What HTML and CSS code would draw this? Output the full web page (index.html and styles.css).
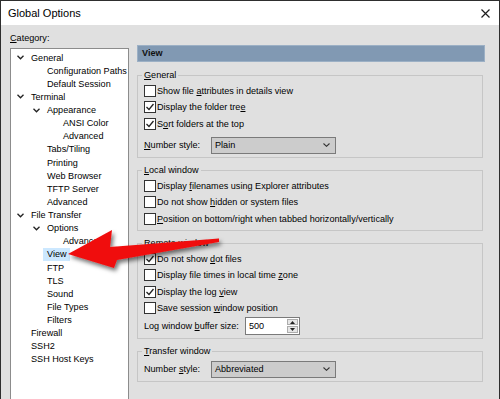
FILE: index.html
```html
<!DOCTYPE html>
<html lang="en">
<head>
    <meta charset="UTF-8">
    <title>Global Options</title>
    <link rel="stylesheet" href="styles.css">
</head>
<body>
<div class="window">
    <div class="titlebar">
        <span class="title">Global Options</span>
        <svg class="close" width="9" height="9" viewBox="0 0 9 9"><path d="M0.5 0.5 L8.5 8.5 M8.5 0.5 L0.5 8.5" stroke="#1e1e1e" stroke-width="1.2" fill="none"/></svg>
    </div>
    <div class="content">
        <div class="sidebar">
            <div class="cat-label"><u>C</u>ategory:</div>
            <div class="tree">
                <div class="node lv0"><span class="twist"><svg width="7" height="5" viewBox="0 0 7 5"><path d="M0.5 0.8 L3.5 3.8 L6.5 0.8" stroke="#222" stroke-width="1.3" fill="none"/></svg></span>General</div>
                <div class="node lv1"><span class="twist"></span>Configuration Paths</div>
                <div class="node lv1"><span class="twist"></span>Default Session</div>
                <div class="node lv0"><span class="twist"><svg width="7" height="5" viewBox="0 0 7 5"><path d="M0.5 0.8 L3.5 3.8 L6.5 0.8" stroke="#222" stroke-width="1.3" fill="none"/></svg></span>Terminal</div>
                <div class="node lv1"><span class="twist"><svg width="7" height="5" viewBox="0 0 7 5"><path d="M0.5 0.8 L3.5 3.8 L6.5 0.8" stroke="#222" stroke-width="1.3" fill="none"/></svg></span>Appearance</div>
                <div class="node lv2"><span class="twist"></span>ANSI Color</div>
                <div class="node lv2"><span class="twist"></span>Advanced</div>
                <div class="node lv1"><span class="twist"></span>Tabs/Tiling</div>
                <div class="node lv1"><span class="twist"></span>Printing</div>
                <div class="node lv1"><span class="twist"></span>Web Browser</div>
                <div class="node lv1"><span class="twist"></span>TFTP Server</div>
                <div class="node lv1"><span class="twist"></span>Advanced</div>
                <div class="node lv0"><span class="twist"><svg width="7" height="5" viewBox="0 0 7 5"><path d="M0.5 0.8 L3.5 3.8 L6.5 0.8" stroke="#222" stroke-width="1.3" fill="none"/></svg></span>File Transfer</div>
                <div class="node lv1"><span class="twist"><svg width="7" height="5" viewBox="0 0 7 5"><path d="M0.5 0.8 L3.5 3.8 L6.5 0.8" stroke="#222" stroke-width="1.3" fill="none"/></svg></span>Options</div>
                <div class="node lv2"><span class="twist"></span>Advanced</div>
                <div class="node lv1"><span class="twist"></span><span class="sel">View</span></div>
                <div class="node lv1"><span class="twist"></span>FTP</div>
                <div class="node lv1"><span class="twist"></span>TLS</div>
                <div class="node lv1"><span class="twist"></span>Sound</div>
                <div class="node lv1"><span class="twist"></span>File Types</div>
                <div class="node lv1"><span class="twist"></span>Filters</div>
                <div class="node lv0"><span class="twist"></span>Firewall</div>
                <div class="node lv0"><span class="twist"></span>SSH2</div>
                <div class="node lv0"><span class="twist"></span>SSH Host Keys</div>
            </div>
        </div>
        <div class="pane">
            <div class="pane-head">View</div>

            <fieldset class="group">
                <legend><u>G</u>eneral</legend>
                <div class="check"><span class="box"></span><span>Show file <u>a</u>ttributes in details view</span></div>
                <div class="check"><span class="box"><svg width="10" height="10" viewBox="0 0 10 10"><path d="M1.5 5 L4 7.5 L8.5 2" stroke="#222" stroke-width="1.3" fill="none"/></svg></span><span>Display the folder tre<u>e</u></span></div>
                <div class="check"><span class="box"><svg width="10" height="10" viewBox="0 0 10 10"><path d="M1.5 5 L4 7.5 L8.5 2" stroke="#222" stroke-width="1.3" fill="none"/></svg></span><span>S<u>o</u>rt folders at the top</span></div>
                <div class="field">
                    <span class="field-label"><u>N</u>umber style:</span>
                    <div class="select"><span>Plain</span><svg width="7" height="4" viewBox="0 0 7 4"><path d="M0.5 0.5 L3.5 3.3 L6.5 0.5" stroke="#333" stroke-width="1.1" fill="none"/></svg></div>
                </div>
            </fieldset>

            <fieldset class="group">
                <legend><u>L</u>ocal window</legend>
                <div class="check"><span class="box"></span><span>Display <u>f</u>ilenames using Explorer attributes</span></div>
                <div class="check"><span class="box"></span><span>Do not show <u>h</u>idden or system files</span></div>
                <div class="check"><span class="box"></span><span><u>P</u>osition on bottom/right when tabbed horizontally/vertically</span></div>
            </fieldset>

            <fieldset class="group">
                <legend><u>R</u>emote window</legend>
                <div class="check"><span class="box"><svg width="10" height="10" viewBox="0 0 10 10"><path d="M1.5 5 L4 7.5 L8.5 2" stroke="#222" stroke-width="1.3" fill="none"/></svg></span><span>Do not show <u>d</u>ot files</span></div>
                <div class="check"><span class="box"></span><span>Display file times in local time <u>z</u>one</span></div>
                <div class="check"><span class="box"><svg width="10" height="10" viewBox="0 0 10 10"><path d="M1.5 5 L4 7.5 L8.5 2" stroke="#222" stroke-width="1.3" fill="none"/></svg></span><span>Display the log <u>v</u>iew</span></div>
                <div class="check"><span class="box"></span><span>Save session <u>w</u>indow position</span></div>
                <div class="field spin-field">
                    <span class="field-label wide">Log window <u>b</u>uffer size:</span>
                    <div class="spin">
                        <span class="spin-value">500</span>
                        <span class="spin-buttons">
                            <span class="spin-btn"><svg width="5" height="3" viewBox="0 0 5 3"><path d="M0 3 L2.5 0 L5 3 Z" fill="#222"/></svg></span>
                            <span class="spin-btn"><svg width="5" height="3" viewBox="0 0 5 3"><path d="M0 0 L2.5 3 L5 0 Z" fill="#222"/></svg></span>
                        </span>
                    </div>
                </div>
            </fieldset>

            <fieldset class="group">
                <legend><u>T</u>ransfer window</legend>
                <div class="field">
                    <span class="field-label">Number <u>s</u>tyle:</span>
                    <div class="select"><span>Abbreviated</span><svg width="7" height="4" viewBox="0 0 7 4"><path d="M0.5 0.5 L3.5 3.3 L6.5 0.5" stroke="#333" stroke-width="1.1" fill="none"/></svg></div>
                </div>
            </fieldset>
        </div>
    </div>

    <!-- callout arrow drawn over the dialog -->
    <svg class="arrow" width="500" height="399" viewBox="0 0 500 399">
        <defs>
            <filter id="shade" x="-20%" y="-40%" width="140%" height="180%">
                <feDropShadow dx="2" dy="3" stdDeviation="2" flood-color="#000" flood-opacity="0.55"/>
            </filter>
        </defs>
        <polygon points="68,254 112,230 110,247 219,238.5 219,242 117,260 114,268" fill="#f00d0d" filter="url(#shade)"/>
    </svg>
</div>
</body>
</html>
```

FILE: styles.css
```css
* {
    box-sizing: border-box;
}
body {
    margin: 0;
    font-family: "Liberation Sans", Arial, sans-serif;
    font-size: 9.1px;
    color: #000;
    background: #e0e0e0;
}
u {
    text-decoration-thickness: 1px;
    text-underline-offset: 1px;
}
.window {
    position: relative;
    width: 500px;
    height: 399px;
    border: 1px solid #2e2e2e;
    border-bottom: none;
    background: #e0e0e0;
    display: flex;
    flex-direction: column;
    overflow: hidden;
}
.titlebar {
    height: 24px;
    flex-shrink: 0;
    background: #fff;
    display: flex;
    align-items: center;
    justify-content: space-between;
    padding: 0 9px 0 7px;
}
.title {
    font-size: 11px;
}
.content {
    flex: 1;
    display: flex;
    min-height: 0;
}
.sidebar {
    width: 128px;
    flex-shrink: 0;
    padding-left: 9px;
    display: flex;
    flex-direction: column;
}
.cat-label {
    margin-top: 7px;
    line-height: 13px;
}
.tree {
    flex: 1;
    margin-top: 3px;
    background: #fff;
    border: 1px solid #8c8c8c;
    border-bottom: none;
    padding-top: 2px;
}
.node {
    display: flex;
    align-items: center;
    height: 13.13px;
    white-space: nowrap;
    padding-left: 6px;
}
.node.lv1 {
    padding-left: 22px;
}
.node.lv2 {
    padding-left: 38px;
}
.twist {
    width: 14px;
    flex-shrink: 0;
    display: flex;
    align-items: center;
}
.sel {
    background: #cce8ff;
    line-height: 13px;
    margin-left: -4px;
    padding: 0 3px 0 4px;
}
.pane {
    flex: 1;
    padding: 20px 14px 0 8px;
}
.pane-head {
    height: 17px;
    background: #8199b3;
    border: 1px solid #9cb0c5;
    font-weight: bold;
    line-height: 15px;
    padding-left: 4px;
    color: #111;
}
.group {
    margin: 6px 2px 0 0;
    border: 1px solid #c6c6c6;
    padding: 1px 6px 3px;
    min-width: 0;
}
.pane-head + .group {
    margin-top: 7px;
}
.group legend {
    padding: 0 2px;
    margin-left: -2px;
    line-height: 13px;
}
.check {
    display: flex;
    align-items: center;
    height: 16.3px;
    white-space: nowrap;
}
.box {
    width: 12px;
    height: 12px;
    flex-shrink: 0;
    margin-right: 1px;
    border: 1px solid #333;
    background: #fff;
    display: flex;
    align-items: center;
    justify-content: center;
}
.field {
    display: flex;
    align-items: center;
    margin-top: 5px;
}
.group legend + .field {
    margin-top: 2px;
}
.field.spin-field {
    margin-top: 1px;
}
.field-label {
    width: 67px;
    flex-shrink: 0;
}
.field-label.wide {
    width: 101px;
}
.select {
    width: 125px;
    height: 17px;
    background: #cccccc;
    border: 1px solid #7a7a7a;
    display: flex;
    align-items: center;
    justify-content: space-between;
    padding: 0 5px 0 3px;
}
.spin {
    width: 55px;
    height: 18px;
    border: 1px solid #7a7a7a;
    background: #fff;
    display: flex;
}
.spin-value {
    flex: 1;
    padding-left: 3px;
    line-height: 16px;
}
.spin-buttons {
    width: 12px;
    display: flex;
    flex-direction: column;
    gap: 1px;
    padding: 1px 1px 1px 0;
}
.spin-btn {
    flex: 1;
    background: #e6e6e6;
    border: 1px solid #acacac;
    display: flex;
    align-items: center;
    justify-content: center;
}
.arrow {
    position: absolute;
    top: -1px;
    left: -1px;
    pointer-events: none;
}
```
